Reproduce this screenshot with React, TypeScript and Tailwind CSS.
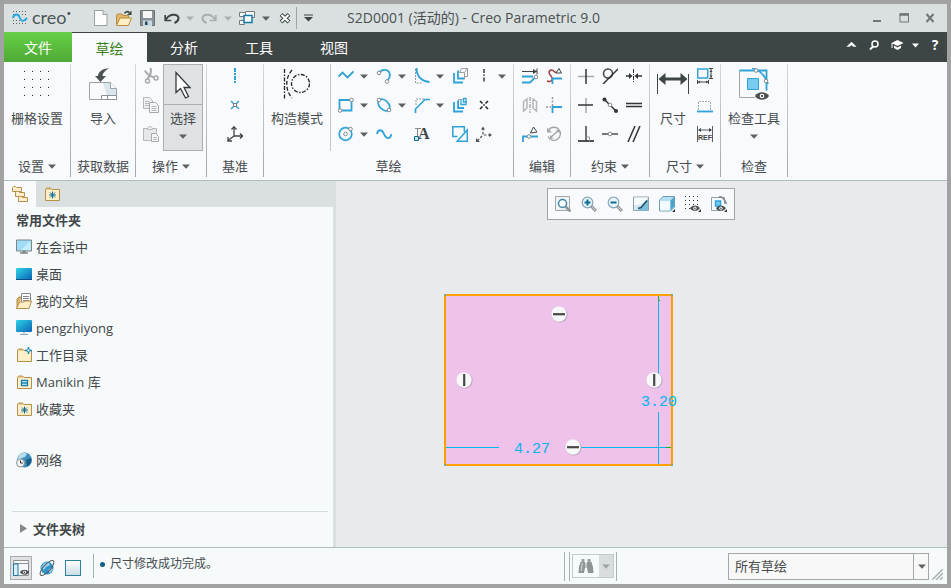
import type { ReactNode } from "react";

const BLUE = "#2fa3d6";
const INK = "#3e4545";
const SOFT = "#b4b8ba";

function Svg({ w = 16, h = 16, children }: { w?: number; h?: number; children: ReactNode }) {
  return (
    <svg aria-hidden="true" className="shrink-0" width={w} height={h} viewBox={`0 0 ${w} ${h}`} fill="none">
      {children}
    </svg>
  );
}

function Caret({ color = "#5c6060" }: { color?: string }) {
  return (
    <Svg w={8} h={5}>
      <path d="M0 .5h8L4 4.8Z" fill={color} />
    </Svg>
  );
}

function IconButton({ label, children }: { label: string; children: ReactNode }) {
  return (
    <button type="button" aria-label={label} className="grid shrink-0 place-items-center">
      {children}
    </button>
  );
}

/* ---------- title bar ---------- */

function CreoLogo() {
  return (
    <Svg w={16} h={16}>
      <g fill="#5d6666">
        {[1, 4, 7, 10, 13].map((x) => (
          <g key={x}>
            <rect x={x} y="1" width="1" height="1" />
            <rect x={x} y="13" width="1" height="1" />
            {x !== 4 && x !== 7 && <rect x={x} y="4" width="1" height="1" />}
            {x !== 10 && <rect x={x} y="10" width="1" height="1" />}
          </g>
        ))}
      </g>
      <path d="M1 8c1-4 5-5 6.500-1s3 6 7.500 1" stroke="#27a9e0" strokeWidth="2" />
    </Svg>
  );
}

function NewIcon() {
  return (
    <Svg w={14}>
      <path d="M.5.5h8.500l4 4v11H.5Z" fill="#fdfdfd" stroke="#9a9d9d" />
      <path d="M9 .5v4h4" fill="#dfe3e3" stroke="#9a9d9d" />
    </Svg>
  );
}

function OpenIcon() {
  return (
    <Svg>
      <path d="M.5 14.500V5l1.500-1h4l1 1.500h5.500V9" fill="#e2b66b" stroke="#b98d3f" />
      <path d="M.5 15.500 4 8h11.500l-3 7.500Z" fill="#fdeec5" stroke="#b98d3f" />
      <path d="M8.500 3.500c1-2 3-2.500 5-1" stroke={INK} strokeWidth="1.500" />
      <path d="M15.500.5v4.500h-4.500Z" fill={INK} />
    </Svg>
  );
}

function SaveIcon() {
  return (
    <Svg>
      <path d="M.5.5h14v15h-14Z" fill="#8b9194" stroke="#6a7174" />
      <path d="M3 1h9v7H3Z" fill="#f5f7f7" />
      <path d="M3 10.500h9V16H3Z" fill="#c4dbe6" />
      <path d="M5 11.500h2.500V15H5Z" fill="#31434d" />
    </Svg>
  );
}

function UndoIcon({ flip = false }: { flip?: boolean }) {
  return (
    <Svg>
      <g transform={flip ? "matrix(-1 0 0 1 16 0)" : undefined} stroke={flip ? "#a9afaf" : INK}>
        <path d="M2 9.500C5 4 13 3 14.500 7.500c.3 2.500-1 4-4 5.500" strokeWidth="2" />
        <path d="M1.200 5v5.500h6" strokeWidth="1.700" />
      </g>
    </Svg>
  );
}

function WindowsIcon() {
  return (
    <Svg>
      <path d="M6.500 1.500h9v6h-9ZM.5 2.500h6v4h-6ZM.5 10.500h5v4h-5Z" fill="#f7f9f9" stroke="#747b7b" />
      <path d="M5 5.500h8v7H5Z" fill="#fff" stroke="#127aa8" strokeWidth="1.500" />
    </Svg>
  );
}

function CloseFileIcon() {
  return (
    <Svg w={12} h={12}>
      <path d="m2 2.500 8 7.500m0-7.500L2 10" stroke={INK} strokeWidth="4" />
      <path d="m2.500 3 7 6.500m0-6.500-7 6.500" stroke="#fff" strokeWidth="2" />
    </Svg>
  );
}

function TitleBar() {
  return (
    <header className="flex h-7 shrink-0 items-center bg-[#dae0e0]">
      <div className="flex flex-1 items-center pl-2">
        <CreoLogo />
        <span className="mb-0.5 ml-1 w-[42px] font-['Lato',sans-serif] text-[18px] leading-5 text-[#4c5555]">
          creo<span className="align-top text-[8px] leading-3">•</span>
        </span>
        <div className="ml-5 flex items-center gap-2">
          <IconButton label="新建"><NewIcon /></IconButton>
          <IconButton label="打开"><OpenIcon /></IconButton>
          <IconButton label="保存"><SaveIcon /></IconButton>
          <IconButton label="撤消"><UndoIcon /></IconButton>
        </div>
        <div className="ml-1.5 flex items-center gap-[7px]">
          <IconButton label="撤消列表"><Caret color="#a9afaf" /></IconButton>
          <IconButton label="重做"><UndoIcon flip /></IconButton>
          <IconButton label="重做列表"><Caret color="#a9afaf" /></IconButton>
          <IconButton label="窗口"><WindowsIcon /></IconButton>
          <IconButton label="窗口列表"><Caret /></IconButton>
        </div>
        <div className="ml-[9px] flex items-center gap-[5px]">
          <IconButton label="关闭文件"><CloseFileIcon /></IconButton>
          <span className="h-[22px] w-px bg-[#9ea5a5]" />
          <button type="button" aria-label="自定义" className="ml-0.5 grid">
            <Svg w={9} h={8}>
              <path d="M0 1h9" stroke={INK} />
              <path d="M0 3h9L4.500 7.500Z" fill={INK} />
            </Svg>
          </button>
        </div>
      </div>
      <h1 className="text-[14px] leading-5 whitespace-nowrap text-[#4a5050]">S2D0001 (活动的) - Creo Parametric 9.0</h1>
      <div className="flex flex-1 items-center justify-end gap-4 pr-3">
        <IconButton label="最小化">
          <Svg w={10} h={10}><path d="M0 8h8" stroke="#6f7575" strokeWidth="2" /></Svg>
        </IconButton>
        <IconButton label="最大化">
          <Svg w={10} h={10}>
            <path d="M1 1h8.500v8H1Z" stroke="#6f7575" />
            <path d="M.5 1.500h9.500" stroke="#6f7575" strokeWidth="2.500" />
          </Svg>
        </IconButton>
        <IconButton label="关闭">
          <Svg w={10} h={10}><path d="m1.500 1 7 8m0-8-7 8" stroke="#6f7575" strokeWidth="2" /></Svg>
        </IconButton>
      </div>
    </header>
  );
}

/* ---------- tabs ---------- */

function TabBar() {
  return (
    <nav className="flex h-[30px] shrink-0 items-stretch bg-[#3e4545] text-[14px] text-white">
      <button type="button" className="w-[68px] bg-linear-to-b from-[#66d146] to-[#4fa937] pt-0.5">文件</button>
      <button type="button" className="mt-px w-[75px] bg-[#f9fafd] pt-0.5 text-[#3a8018]">草绘</button>
      {["分析", "工具", "视图"].map((tab) => (
        <button type="button" key={tab} className="w-[75px] pt-0.5 pr-px">{tab}</button>
      ))}
      <div className="mb-1 ml-auto flex items-center pr-2">
        <IconButton label="最小化功能区">
          <Svg w={11} h={10}><path d="m1 6.500 4.500-4.500L10 6.500H7.500l-2-1.500-2 1.500Z" fill="#fff" stroke="#fff" strokeWidth=".5" /></Svg>
        </IconButton>
        <button type="button" aria-label="搜索" className="ml-3 grid">
          <Svg w={10} h={10}>
            <circle cx="6" cy="4" r="3" stroke="#fff" strokeWidth="1.500" />
            <path d="M4 6.500 1 9.500" stroke="#fff" strokeWidth="2" />
          </Svg>
        </button>
        <button type="button" aria-label="学习" className="ml-3 grid">
          <Svg w={13} h={10}>
            <path d="m6.500 0 6 3-6 3-6-3Z" fill="#fff" />
            <path d="M3 5.500v2.500l3.500 2 3.500-2V5.500l-3.500 2Z" fill="#fff" />
            <path d="M1 3v5" stroke="#fff" />
          </Svg>
        </button>
        <button type="button" aria-label="学习列表" className="ml-2 grid">
          <Svg w={7} h={5}><path d="M0 .5h7L3.500 4.500Z" fill="#fff" /></Svg>
        </button>
        <button type="button" aria-label="帮助" className="ml-3 w-2 text-[14px] leading-4 font-bold">?</button>
      </div>
    </nav>
  );
}

/* ---------- ribbon ---------- */

function Divider({ short = false }: { short?: boolean }) {
  return (
    <span
      className={[
        "w-px shrink-0",
        short ? "mt-0.5 mb-[-2px] bg-[#c4c8c9]" : "mt-0.5 mb-[3px] bg-linear-to-b from-[#d5d9da] to-[#a3a9aa]",
      ].join(" ")}
    />
  );
}

function Group({ title, menu = false, width, children }: { title: string; menu?: boolean; width: string; children: ReactNode }) {
  return (
    <>
      <section className={`flex shrink-0 flex-col ${width}`}>
        <div className="flex h-[87px] justify-center">{children}</div>
        <div className="mt-1 flex h-[26px] items-center justify-center gap-1">
          <span className="whitespace-nowrap">{title}</span>
          {menu && <Caret />}
        </div>
      </section>
      <Divider />
    </>
  );
}

function BigButton({ label, icon, menu = false }: { label: string; icon: ReactNode; menu?: boolean }) {
  return (
    <button type="button" className="flex flex-col items-center">
      <span className="grid h-11 place-items-center">{icon}</span>
      <span className="mt-0.5 leading-5 whitespace-nowrap">{label}</span>
      {menu && <span className="mt-1.5"><Caret /></span>}
    </button>
  );
}

function IconRows({ rows }: { rows: [string, ReactNode][][] }) {
  return (
    <div className="flex flex-col">
      {rows.map((row) => (
        <div key={row[0][0]} className="flex h-[29px] items-center gap-2 pb-px">
          {row.map(([label, icon]) => (
            <IconButton key={label} label={label}>{icon}</IconButton>
          ))}
        </div>
      ))}
    </div>
  );
}

function GridDots() {
  return (
    <Svg w={28} h={28}>
      {[1, 9, 17, 25].map((y) => [1, 9, 17, 25].map((x) => <rect key={`${x}-${y}`} x={x} y={y} width="1" height="1" fill="#222" />))}
    </Svg>
  );
}

function ImportIcon() {
  return (
    <Svg w={28} h={32}>
      <path d="M.5 14.500h21l6 6v11H.5Z" fill="#f8fafb" stroke="#9ba3a8" />
      <path d="M14 15h7.500l5.500 6v6h-9Z" fill="#d9e6ee" />
      <path d="M21.500 14.500v6h6" fill="#fff" stroke="#9ba3a8" />
      <path d="M12.500 27.500h15v4h-15ZM18.500 27.500v4" fill="#fff" stroke="#8d9499" />
      <path d="M20 .5C14 .5 9.500 3 9 8H6l5.500 6L17 8h-3.500c0-3 2.500-5.500 6.500-7.500Z" fill="#4b5254" />
    </Svg>
  );
}

function ScissorsIcon() {
  return (
    <Svg>
      <path d="M2 2.500c1 3 5 5.500 9 7M7.500 0c1.500 4 0 7-3 11" stroke="#a6aaac" strokeWidth="2" />
      <circle cx="4.500" cy="13" r="2" stroke="#a6aaac" strokeWidth="1.500" />
      <circle cx="13" cy="10" r="2" stroke="#a6aaac" strokeWidth="1.500" />
    </Svg>
  );
}

function CopyIcon() {
  return (
    <Svg>
      <path d="M.5.5h6l3 3v8h-9Z" fill="#eef0f1" stroke={SOFT} />
      <path d="M6.500 5.500h6l3 3v7h-9Z" fill="#f6f7f8" stroke="#a6aaac" />
      <path d="M2 4.500h4m-4 2h4m-4 2h4M8.500 9.500h5m-5 2h5m-5 2h5" stroke={SOFT} />
    </Svg>
  );
}

function PasteIcon() {
  return (
    <Svg>
      <path d="M.5 2.500h13v12H.5Z" fill="#e6e8e9" stroke={SOFT} />
      <path d="M4.500 3.500c0-4 5-4 5 0Z" fill="#f5f6f7" stroke={SOFT} />
      <path d="M8.500 7.500h4l3 3v5h-7Z" fill="#f6f7f8" stroke="#a6aaac" />
      <path d="M10 11.500h4m-4 2h4" stroke={SOFT} />
    </Svg>
  );
}

function CursorIcon() {
  return (
    <Svg w={18} h={28}>
      <path d="M2 1.500v20l4.500-4 5 9.500 3-1.500-4.500-9h6Z" fill="#fff" stroke="#33383a" strokeWidth="1.300" />
    </Svg>
  );
}

function ConstructionIcon() {
  return (
    <Svg w={28} h={30}>
      <g stroke="#222" strokeWidth="1.300">
        <path d="M1.500 0v30" strokeDasharray="4 1.500 1.500 1.500" />
        <path d="M9 1C2 9 2 21 9 29" strokeDasharray="4 2" />
        <circle cx="17.500" cy="14.500" r="9" strokeDasharray="4 1.500 1.500 1.500" />
      </g>
    </Svg>
  );
}

function Knob({ x, y }: { x: number; y: number }) {
  return <circle cx={x} cy={y} r="1.800" fill="#fff" stroke="#858a8c" />;
}

const datumIcons: [string, ReactNode][][] = [
  [["中心线", <Svg><path d="M8 0v16" stroke={BLUE} strokeWidth="2" strokeDasharray="4 1 2 1" /></Svg>]],
  [["点", <Svg><path d="m4 4 8 8m0-8-8 8" stroke={BLUE} strokeWidth="1.500" /><path d="M6.500 6.500h3v3h-3Z" fill="#fff" stroke="#777" /></Svg>]],
  [["坐标系", <Svg>
    <path d="M7 1v9h9M7 10l-6 4.500" stroke={INK} strokeWidth="1.300" />
    <path d="M4.500 3.500 7 .8l2.500 2.700M13 7.500l2.500 2.500-2.500 2.500M1 11v4h4" stroke={INK} strokeWidth="1.300" />
  </Svg>]],
];

const Line = <Svg><path d="m.5 8.500 4-4 5 5 6-6" stroke={BLUE} strokeWidth="1.800" /></Svg>;
const Arc = (
  <Svg><path d="M3 5c2-4 10-5 11 2 0 2-1 4-3 6" stroke={BLUE} strokeWidth="1.800" /><Knob x={3} y={5} /><Knob x={11} y={13.500} /></Svg>
);
const Fillet = (
  <Svg><path d="M1.500 1v14h6" stroke="#999" strokeDasharray="2 1" /><path d="M2.500 0c0 7 4 13 13 14" stroke={BLUE} strokeWidth="2" /></Svg>
);
const Offset = (
  <Svg>
    <path d="M7.500 4.500h5v7M9.500.5h6v8h-3M7.500 4.500l2-4M12.500 4.500l3-4" stroke="#9aa0a2" />
    <path d="M2 5v9.500h9M6 2.500v8h6" stroke={BLUE} strokeWidth="1.800" />
  </Svg>
);
const CenterLine = <Svg><path d="M8 1v14" stroke="#222" strokeWidth="1.300" strokeDasharray="4 1.500 1.500 1.500" /></Svg>;
const Rect = (
  <Svg><path d="M1.500 3h12v10.500h-12Z" stroke={BLUE} strokeWidth="1.800" /><Knob x={13.500} y={3} /><Knob x={2} y={13.500} /></Svg>
);
const Ellipse = (
  <Svg><ellipse cx="8" cy="8" rx="7" ry="4.500" transform="rotate(45 8 8)" stroke={BLUE} strokeWidth="1.700" /><Knob x={3} y={3} /><Knob x={13} y={13} /></Svg>
);
const Chamfer = (
  <Svg><path d="M2 8V2h8" stroke="#999" strokeDasharray="2 1" /><path d="M1.500 16v-4L11 2.500h5" stroke={BLUE} strokeWidth="1.700" /></Svg>
);
const Thicken = (
  <Svg>
    <path d="M6.500 11V2.500h4" stroke="#9aa0a2" />
    <path d="M2 5v9.500h9M6 3.500v7.500h6" stroke={BLUE} strokeWidth="1.800" />
    <path d="M9 3v4.500h5V1.500h-2.500V5H15" stroke={BLUE} strokeWidth="1.300" />
  </Svg>
);
const Point = <Svg><path d="m4 4 2.500 2.500M12 4 9.500 6.500M4 12l2.500-2.500M12 12 9.500 9.500M7.200 8h1.600" stroke="#222" strokeWidth="1.500" /></Svg>;
const Circle = (
  <Svg><circle cx="7.500" cy="8" r="6.300" stroke={BLUE} strokeWidth="1.700" /><Knob x={7.500} y={8} /><Knob x={12.500} y={3} /></Svg>
);
const Spline = <Svg><path d="M1 8c1-5 5-5 7 0s6 6 7.500 0" stroke={BLUE} strokeWidth="1.800" /></Svg>;
const TextTool = (
  <Svg>
    <path d="M1 2.500h6M3.500 2.500V10" stroke="#85898b" />
    <text x="4" y="13" fontSize="16" fontWeight="700" fontFamily="Liberation Serif, serif" fill={INK}>A</text>
    <path d="M.5 10.500h4v4h-4Z" fill="#c7e6f4" stroke="#0d6a97" />
  </Svg>
);
const Project = (
  <Svg><path d="M5.500 10.500H.8v-9.700h11.500v5M15.300 4v11.200H5.200Z" stroke={BLUE} strokeWidth="1.500" /></Svg>
);
const Csys = (
  <Svg><path d="M7 2v7h8M6 10l-5 5" stroke="#4c5254" strokeWidth="1.200" strokeDasharray="2.500 1.500" /><path d="m5 3.500 2-3 2 3ZM13 7l3 2-3 2ZM0 12v4h4Z" fill="#4c5254" /></Svg>
);

const sketchTools: [string, ReactNode, boolean][][] = [
  [["线", Line, true], ["弧", Arc, true], ["圆角", Fillet, true], ["偏移", Offset, false], ["构造中心线", CenterLine, true]],
  [["矩形", Rect, true], ["椭圆", Ellipse, true], ["倒角", Chamfer, true], ["加厚", Thicken, false], ["构造点", Point, false]],
  [["圆", Circle, true], ["样条", Spline, false], ["文本", TextTool, false], ["投影", Project, false], ["构造坐标系", Csys, false]],
];

function SketchTools() {
  return (
    <div className="grid grid-cols-[38px_38px_38px_24px_30px] px-[7px]">
      {sketchTools.flat().map(([label, icon, menu]) => (
        <div key={label} className="flex h-[29px] items-center gap-1.5 pb-px">
          <IconButton label={label}>{icon}</IconButton>
          {menu && <IconButton label={`${label}选项`}><Caret /></IconButton>}
        </div>
      ))}
    </div>
  );
}

const editIcons: [string, ReactNode][][] = [
  [
    ["修改", <Svg><path d="M0 3.500h15M15 .5v6" stroke={INK} /><path d="m11 1 4 2.500-4 2.500Z" fill={INK} /><path d="M0 8.500h11M0 14.500h8l5-5" stroke={BLUE} strokeWidth="1.800" /><Knob x={14} y={9} /></Svg>],
    ["删除段", <Svg><path d="M1 13c6 2 6-3 4-5s-3-5 0-6 3 4 6 2" stroke="#a33d3a" strokeWidth="1.500" /><path d="m10 5 3-4.500L15.500 5Z" fill="#fff" stroke={INK} /><path d="M6.500 16v-5.500H16" stroke={BLUE} strokeWidth="1.800" /></Svg>],
  ],
  [
    ["镜像", <Svg><path d="M1.500 4.500 5 2v9l-3.500 3ZM14.500 4.500 11 2v9l3.500 3Z" stroke={SOFT} strokeWidth="1.500" /><path d="M8 0v16" stroke="#85898b" strokeDasharray="4 1 1 1" /></Svg>],
    ["拐角", <Svg><path d="M0 10h5M6.500 0v9" stroke="#999" strokeWidth="1.500" strokeDasharray="2 1.500" /><path d="M6.500 16v-6H16" stroke={BLUE} strokeWidth="1.800" /></Svg>],
  ],
  [
    ["分割", <Svg><path d="M1 16v-5.500h15" stroke={BLUE} strokeWidth="1.800" /><path d="m8.500 7 3-6 3.500 5Z" fill="#fff" stroke={INK} /><Knob x={7} y={10.500} /></Svg>],
    ["旋转调整大小", <Svg><path d="M3 3.500A6.500 6.500 0 1 1 2 10.500M5 11l7-6" stroke="#9fa4a6" strokeWidth="1.300" /><path d="M1 1.500v5h5ZM4 9v3.500h3.500ZM10 4h3v3Z" fill="#9fa4a6" /></Svg>],
  ],
];

const constraintIcons: [string, ReactNode][][] = [
  [
    ["竖直", <Svg><path d="M0 8.500h16" stroke="#a5a9ab" strokeWidth="1.500" /><path d="M8 1v15" stroke="#333" strokeWidth="1.500" /></Svg>],
    ["相切", <Svg><circle cx="6" cy="5.500" r="4.500" stroke="#444" strokeWidth="1.500" /><path d="m1 16 15-15" stroke="#333" strokeWidth="1.500" /></Svg>],
    ["对称", <Svg><path d="M7.500 1v14" stroke="#333" strokeDasharray="4 1 1 1" /><path d="M0 8h4m7 0h5" stroke="#333" strokeWidth="1.500" /><path d="m3 5 3.500 3L3 11Zm9 0L8.500 8l3.500 3Z" fill="#333" /></Svg>],
  ],
  [
    ["水平", <Svg><path d="M8 1v15" stroke="#a5a9ab" strokeWidth="1.500" /><path d="M0 8h15" stroke="#333" strokeWidth="1.500" /></Svg>],
    ["中点", <Svg><path d="m2.500 2.500 12 12" stroke="#333" strokeWidth="1.500" /><circle cx="2.500" cy="2.500" r="2" fill="#333" /><circle cx="14" cy="14" r="2" fill="#333" /><Knob x={8} y={8} /></Svg>],
    ["相等", <Svg><path d="M0 6.500h16M0 9.500h16" stroke="#333" strokeWidth="1.300" /></Svg>],
  ],
  [
    ["垂直", <Svg><path d="M8 0v15" stroke="#444" strokeWidth="1.500" /><path d="M0 15h16" stroke="#333" strokeWidth="1.700" /><path d="M8 11h3.500v4" stroke="#999" /></Svg>],
    ["重合", <Svg><path d="M0 8h16" stroke="#333" strokeWidth="1.300" /><Knob x={8} y={8} /></Svg>],
    ["平行", <Svg><path d="M2 16 9 0M7 16l7-16" stroke="#333" strokeWidth="1.500" /></Svg>],
  ],
];

const dimensionIcons: [string, ReactNode][][] = [
  [["周长", <Svg><path d="M.7 1h10v9H.7Z" stroke={BLUE} strokeWidth="1.500" /><path d="M14 1v9M12 .5h4M12 10.500h4M1 14h10M.5 12v4M11.500 12v4" stroke={INK} /><path d="m12.500 4 1.500-2 1.500 2ZM12.500 7.500 14 9.500l1.500-2ZM3 12.500 1 14l2 1.500ZM9 12.500l2 1.500-2 1.500Z" fill={INK} /></Svg>]],
  [["基线", <Svg><path d="M1.500 13V4.500h12V13" stroke="#a5a9ab" strokeDasharray="2 1" /><path d="M0 14.500h16" stroke={BLUE} strokeWidth="1.800" /></Svg>]],
  [["参考", <Svg>
    <path d="M.5 0v16M15.500 0v16M2 4h12" stroke="#5a6062" />
    <path d="M1 4 4 2v4ZM15 4l-3-2v4Z" fill={INK} />
    <text x="1" y="14" fontSize="7" fontWeight="700" fontFamily="Liberation Sans, sans-serif" fill={INK}>REF</text>
  </Svg>]],
];

const DimensionIcon = (
  <Svg w={32} h={22}>
    <path d="M.5 1v20M31.500 1v20" stroke={INK} />
    <path d="M6 6h20" stroke={INK} strokeWidth="3" />
    <path d="m1.500 6 7-6v12ZM30.500 6l-7-6v12Z" fill={INK} />
  </Svg>
);

function Eye({ x, y }: { x: number; y: number }) {
  return (
    <g transform={`translate(${x} ${y})`}>
      <path d="M0 4c3-5 11-5 14 0-3 5-11 5-14 0Z" fill="#4a5052" />
      <circle cx="7" cy="4" r="2.300" fill="#fff" />
      <circle cx="7" cy="4" r="1" fill="#222" />
    </g>
  );
}

const InspectIcon = (
  <Svg w={30} h={32}>
    <path d="M16 29.500H.5v-27" stroke="#a0a5a7" />
    <path d="M.5 2.500h27v20" stroke={BLUE} strokeWidth="1.800" />
    <path d="M13 0c7 2 13 7 16 16" stroke={BLUE} strokeWidth="1.800" />
    <path d="M8.500 10.500h11v11h-11Z" fill="#79ccf0" stroke={BLUE} />
    <Knob x={17} y={2.500} /><Knob x={27} y={13} />
    <Eye x={16} y={24} />
  </Svg>
);

function Ribbon() {
  return (
    <div className="flex h-[119px] shrink-0 overflow-hidden border-b border-[#b0bdbd] bg-[#f9fafd] text-[13px] text-[#474c4e]">
      <Group title="设置" menu width="w-[66px]"><BigButton label="栅格设置" icon={<GridDots />} /></Group>
      <Group title="获取数据" width="w-[64px]"><BigButton label="导入" icon={<ImportIcon />} /></Group>
      <Group title="操作" menu width="w-[70px]">
        <div className="pl-1">
          <IconRows rows={[[["剪切", <ScissorsIcon />]], [["复制", <CopyIcon />]], [["粘贴", <PasteIcon />]]]} />
        </div>
        <div className="mt-0.5 -mb-0.5 ml-1 flex w-10 flex-col border border-[#acafb0] bg-[#dfe1e3]">
          <button type="button" aria-label="选择工具" className="grid h-10 place-items-center border-b border-[#acafb0]"><CursorIcon /></button>
          <button type="button" className="flex grow flex-col items-center gap-1.5 pt-[3px] leading-5">
            选择<Caret />
          </button>
        </div>
      </Group>
      <Group title="基准" width="w-[56px]"><IconRows rows={datumIcons} /></Group>
      <Group title="草绘" width="w-[249px]">
        <div className="flex w-[66px] justify-center"><BigButton label="构造模式" icon={<ConstructionIcon />} /></div>
        <Divider short />
        <SketchTools />
      </Group>
      <Group title="编辑" width="w-[56px]"><IconRows rows={editIcons} /></Group>
      <Group title="约束" menu width="w-[78px]"><IconRows rows={constraintIcons} /></Group>
      <Group title="尺寸" menu width="w-[70px]">
        <BigButton label="尺寸" icon={DimensionIcon} />
        <div className="ml-2"><IconRows rows={dimensionIcons} /></div>
      </Group>
      <Group title="检查" width="w-[66px]"><BigButton label="检查工具" icon={InspectIcon} menu /></Group>
    </div>
  );
}

/* ---------- folder panel ---------- */

function Spark({ x, y }: { x: number; y: number }) {
  return <path transform={`translate(${x} ${y})`} d="M0-3.500v7M-3.500 0h7M-2.500-2.500l5 5M2.500-2.500l-5 5" stroke="#0f6d95" />;
}

function Folder({ children }: { children?: ReactNode }) {
  return (
    <Svg>
      <path d="M1.500 14.500v-11l1-1.500h4l1.500 1.500h7.500v11Z" fill="#fff0cb" stroke="#b78f4b" />
      <path d="M2 3.500 3 2h3.500L8 3.500Z" fill="#d1a862" />
      {children}
    </Svg>
  );
}

const Monitor = (
  <Svg><path d="M.5 1h15v11H.5Z" fill="#9fdcf7" stroke="#7e8385" /><path d="m5 11 9.500-9V11Z" fill="#c6edfb" /><path d="M4 14h8M6.500 12.500h3" stroke="#7e8385" strokeWidth="1.500" /></Svg>
);

function Screen({ stand = false }: { stand?: boolean }) {
  return (
    <Svg>
      <defs>
        <linearGradient id="screen" x1="0" y1="0" x2="1" y2="1">
          <stop offset="0" stopColor="#2ed5e6" />
          <stop offset="1" stopColor="#0c62b5" />
        </linearGradient>
      </defs>
      <rect y={stand ? 0 : 2} width="16" height={stand ? 12 : 12} rx="1" fill="url(#screen)" />
      {stand ? <path d="M8 12v2.500M4 14.500h8" stroke="#8da2ae" /> : <path d="M0 13.500h16" stroke="#0b4d8b" />}
    </Svg>
  );
}

const Documents = (
  <Svg>
    <path d="M1 15V6l2-2h3" fill="#dfb56c" stroke="#b78f4b" />
    <path d="M5.500.5h9v11h-9Z" fill="#fff" stroke="#85898b" />
    <path d="M7 3.500h6M7 5.500h6M7 7.500h6" stroke="#85898b" />
    <path d="M.5 15.500 3.500 9h5l1-1h6l-2.500 7.500Z" fill="#fdeec5" stroke="#b78f4b" />
  </Svg>
);

const Network = (
  <Svg>
    <circle cx="8.500" cy="8" r="7.500" fill="#3b8fbb" />
    <path d="M3 3c3-3 7-2 8-1L9 5 6 6 3 9 1.500 7Z" fill="#b8dbea" />
    <path d="m10 8 5-2c1 4-1 7-4 8.500Z" fill="#1a5c86" />
    <circle cx="4.500" cy="11" r="4" fill="#f3f5f6" stroke="#8b9194" />
    <path d="M4.500 8.500V11H7" stroke="#333" />
  </Svg>
);

const folders: [string, ReactNode][] = [
  ["在会话中", Monitor],
  ["桌面", <Screen />],
  ["我的文档", Documents],
  ["pengzhiyong", <Screen stand />],
  ["工作目录", <Folder><path d="M12.500 0v7M9 3.500h7" stroke="#1283b5" strokeWidth="1.500" /><circle cx="12.500" cy="3.500" r="1.500" fill="#fff" stroke="#1283b5" /></Folder>],
  ["Manikin 库", <Folder><path d="M5.500 6.500h6v5h-6ZM5.500 9h6" fill="#fff" stroke="#0f7fae" strokeWidth="1.300" /></Folder>],
  ["收藏夹", <Folder><Spark x={8.500} y={9} /></Folder>],
];

function FolderPanel() {
  return (
    <aside className="flex w-[332px] shrink-0 flex-col border-r-[3px] border-[#dae0e0] bg-[#f7fafb] text-[13px] text-[#424749]">
      <div className="flex h-[26px] bg-[#dae0e0]">
        <button type="button" aria-label="文件夹" className="grid w-8 place-items-center bg-[#f9fafd]">
          <Svg>
            {[[0, 0], [3, 5], [6, 10]].map(([x, y]) => (
              <path key={x} d={`M${x + 0.5} ${y + 5.5}V${y + 1.5}l1-1h2l1 1h5v4Z`} fill="#fff0cb" stroke="#b78f4b" />
            ))}
          </Svg>
        </button>
        <button type="button" aria-label="收藏" className="grid w-8 place-items-center"><Folder><Spark x={8.500} y={9} /></Folder></button>
      </div>
      <h2 className="flex h-[26px] items-center px-3 font-bold">常用文件夹</h2>
      <ul>
        {folders.map(([name, icon]) => (
          <li key={name}>
            <button type="button" className="flex h-[27px] items-center gap-1 px-3">{icon}{name}</button>
          </li>
        ))}
      </ul>
      <button type="button" className="mt-6 flex h-[27px] items-center gap-1 px-3">{Network}网络</button>
      <div className="mt-auto px-2 pr-[5px]">
        <button type="button" className="flex h-9 w-full items-center gap-1.5 border-t border-[#d6dcdd] pb-0.5 pl-2 font-bold">
          <Svg w={7} h={9}><path d="M0 0v9l7-4.500Z" fill="#85898b" /></Svg>
          文件夹树
        </button>
      </div>
    </aside>
  );
}

/* ---------- graphics area ---------- */

function Lens({ sign }: { sign: string }) {
  return (
    <Svg>
      <path d="m10 10 5 5" stroke="#8f9496" strokeWidth="3" />
      <path d="m10.500 10.500 4 4" stroke="#d5d8d9" />
      <circle cx="6.500" cy="6.500" r="5.300" fill="#e9f6fc" stroke="#8aa7b5" strokeWidth="1.200" />
      <path d={sign} stroke="#0f6d95" strokeWidth="2" />
    </Svg>
  );
}

const Corner = <path d="M16 13v3h-3Z" fill="#333" />;

const viewTools: [string, ReactNode][] = [
  ["重新调整", <Svg><path d="M.5.500h14v14H.5Z" fill="#eef3f5" stroke="#a0a6a8" /><circle cx="7.500" cy="7.500" r="4" fill="#fff" stroke="#3d87a8" strokeWidth="1.500" /><path d="m10.500 10.500 5 5" stroke="#8f9496" strokeWidth="2.500" /></Svg>],
  ["放大", <Lens sign="M6.500 3.500v6M3.500 6.500h6" />],
  ["缩小", <Lens sign="M3.500 6.500h6" />],
  ["重画", <Svg>
    <path d="M.5 1h15v13.500H.5Z" fill="#d4e8f0" stroke="#8da2ac" />
    <path d="M1 1.500h14C12 7 7 9 1 9Z" fill="#f7fbfc" />
    <path d="M15 3v11.500H3c5-1 8-5 12-11.500Z" fill="#7cc0dc" />
    <path d="m5 12.500 3-1 6-7" stroke="#1d4f66" strokeWidth="1.500" />
  </Svg>],
  ["显示样式", <Svg><path d="M.5 4.500 4 .5h11.500v10.500l-4 4H.5Z" fill="#b4e0f3" stroke="#6d9db3" /><path d="M1 5h10v9.500H1Z" fill="#f3fafd" /><path d="M11.500 4.500v10l3.500-4V1Z" fill="#4aa5cf" />{Corner}</Svg>],
  ["栅格显示", <Svg>{[0, 4, 8, 12].map((y) => [0, 4, 8, 12].map((x) => <rect key={`${x}-${y}`} x={x} y={y} width="1" height="1" fill="#333" />))}<g transform="translate(5 8) scale(.7)"><Eye x={0} y={2} /></g>{Corner}</Svg>],
  ["草绘显示", <Svg><path d="M9 14.500H.5v-13h13V8" stroke="#8da2ac" /><path d="M8 0c4 1 6 4 7.500 8" stroke="#85898b" strokeWidth="1.500" /><path d="M4.500 5h5v5h-5Z" fill="#79ccf0" stroke={BLUE} strokeWidth="1.500" /><g transform="translate(5 8) scale(.7)"><Eye x={0} y={2} /></g>{Corner}</Svg>],
];

function Constraint({ x, y, vertical = false }: { x: number; y: number; vertical?: boolean }) {
  return (
    <g transform={`translate(${x} ${y})`}>
      <circle cx=".6" cy=".6" r="8" fill="#b9a6b9" />
      <circle r="7.700" fill="#f6f7f8" />
      <path d={vertical ? "M.5-6V6" : "M-6 .5H6"} stroke="#8c8c8c" strokeWidth="2" />
      <path d={vertical ? "M0-6V6" : "M-6 0H6"} stroke="#222" strokeWidth="1.300" />
    </g>
  );
}

function SketchCanvas() {
  return (
    <main className="relative flex min-w-0 flex-1 flex-col items-center bg-[#e8eaee] pt-[7px] pr-0.5">
      <div className="flex h-8 items-center gap-2.5 border border-[#a0a4a5] bg-[#f9fafd] px-[7px]">
        {viewTools.map(([label, icon]) => <IconButton key={label} label={label}>{icon}</IconButton>)}
      </div>
      <svg className="absolute top-[113px] left-[108px]" width="240" height="172" viewBox="0 0 240 172" fill="none">
        <rect x="1" y="1" width="227" height="170" fill="#eec2ea" />
        <path d="M2 153.500h53M129 153.500h99M214.500 2v92M214.500 118v53" stroke="#00b9ec" />
        <rect x="1" y="1" width="227" height="170" stroke="#ffa200" strokeWidth="2" />
        <path d="M214.500 2v4.500h1.500M222 153.500h5" stroke="#15b324" />
        <path d="M0 0h2v2H0ZM227 0h2v2h-2ZM0 170h2v2H0ZM227 170h2v2h-2Z" fill="#7daa8c" />
        <g fontSize="15" fontFamily="Liberation Mono, monospace" fill="#00b4ea">
          <text x="70" y="159">4.27</text>
          <text x="197" y="112">3.20</text>
        </g>
        <Constraint x={115} y={20} />
        <Constraint x={20} y={86} vertical />
        <Constraint x={210} y={86} vertical />
        <Constraint x={129} y={153} />
      </svg>
    </main>
  );
}

/* ---------- status bar ---------- */

function StatusBar() {
  return (
    <footer className="flex h-[37px] shrink-0 items-center border-t border-[#b0bdbd] bg-[#f6fafb] text-[12px] text-[#474c4e]">
      <button type="button" aria-label="导航器" className="mt-1 ml-1.5 grid h-6 w-[22px] place-items-center border border-[#a9acae] bg-[#dfe1e3]">
        <Svg>
          <path d="M.5.500h15v15H.5ZM.5 3.500h15" fill="#f7f8f9" stroke="#8d9294" />
          <path d="M.5 4h4.500v11.500H.5Z" fill="#d9eef7" stroke="#1a7ba5" />
          <g transform="translate(7 9) scale(.65)"><Eye x={0} y={1} /></g>
        </Svg>
      </button>
      <button type="button" aria-label="浏览器" className="mt-1 ml-[7px] grid">
        <Svg>
          <circle cx="8" cy="8" r="6.500" fill="#3193cb" />
          <path d="M5 3 9 2l2 3-4 2-2 3-3-2Zm6 5 3 1-3 4-2-2Z" fill="#9bd3ee" />
          <ellipse cx="8" cy="8" rx="9.500" ry="3.500" transform="rotate(-48 8 8)" stroke="#50585b" />
        </Svg>
      </button>
      <button type="button" aria-label="全屏" className="mt-1 ml-2.5 h-4 w-4 border border-[#2f7f9f] bg-linear-to-b from-white to-[#c9dde6]" />
      <span className="ml-3 h-6 w-px bg-[#a9b0b0]" />
      <p className="mb-1 ml-1.5 flex items-center gap-[5px] leading-5">
        <span className="h-[5px] w-[5px] rounded-full bg-[#0f5f86]" />
        尺寸修改成功完成。
      </p>
      <div className="ml-auto flex items-center">
        <span className="mr-1 h-[29px] w-px bg-[#a9b0b0]" />
        <span className="mr-0.5 h-[29px] w-px bg-[#a9b0b0]" />
        <button type="button" aria-label="查找" className="flex h-6 w-[42px] border border-[#c5cacc]">
          <span className="grid h-full w-[26px] place-items-center">
            <Svg>
              <path d="M3.500 1h3v3h-3ZM9.500 1h3v3h-3Z" fill="#9a9fa1" />
              <path d="M2.500 4h4.500v6l-1 5H.5L1 9Zm6.500 0h4.500L15 9l.5 6H10l-1-5Z" fill="#8f9496" />
              <path d="M7 5h2v5H7ZM3.500 5H5l-1 8H2.500Z" fill="#c2c6c7" />
            </Svg>
          </span>
          <span className="grid h-full grow place-items-center bg-[#dadddf]"><Caret color="#9fa4a6" /></span>
        </button>
        <span className="ml-0.5 h-[29px] w-px bg-[#a9b0b0]" />
      </div>
      <div className="relative ml-[111px]">
        <select aria-label="选择过滤器" className="block h-[27px] w-[201px] appearance-none border border-[#a4a8a9] bg-[#f8f8f8] pl-1.5 text-[13px]">
          <option>所有草绘</option>
        </select>
        <span className="pointer-events-none absolute top-0 right-0 grid h-[27px] w-4 place-items-center border-l border-[#a4a8a9]"><Caret /></span>
      </div>
      <span className="mr-1 ml-[3px] self-end pb-1">
        <Svg w={11} h={11}><path d="M0 11 11 0M4 11l7-7M8 11l3-3" stroke="#a9aeb0" strokeWidth="1.500" /></Svg>
      </span>
    </footer>
  );
}

export default function App() {
  return (
    <div className="flex min-h-screen flex-col border-4 border-[#a2a2a2] font-['Open_Sans','Noto_Sans_CJK_SC',sans-serif] leading-5">
      <TitleBar />
      <TabBar />
      <Ribbon />
      <div className="flex flex-1">
        <FolderPanel />
        <SketchCanvas />
      </div>
      <StatusBar />
    </div>
  );
}
